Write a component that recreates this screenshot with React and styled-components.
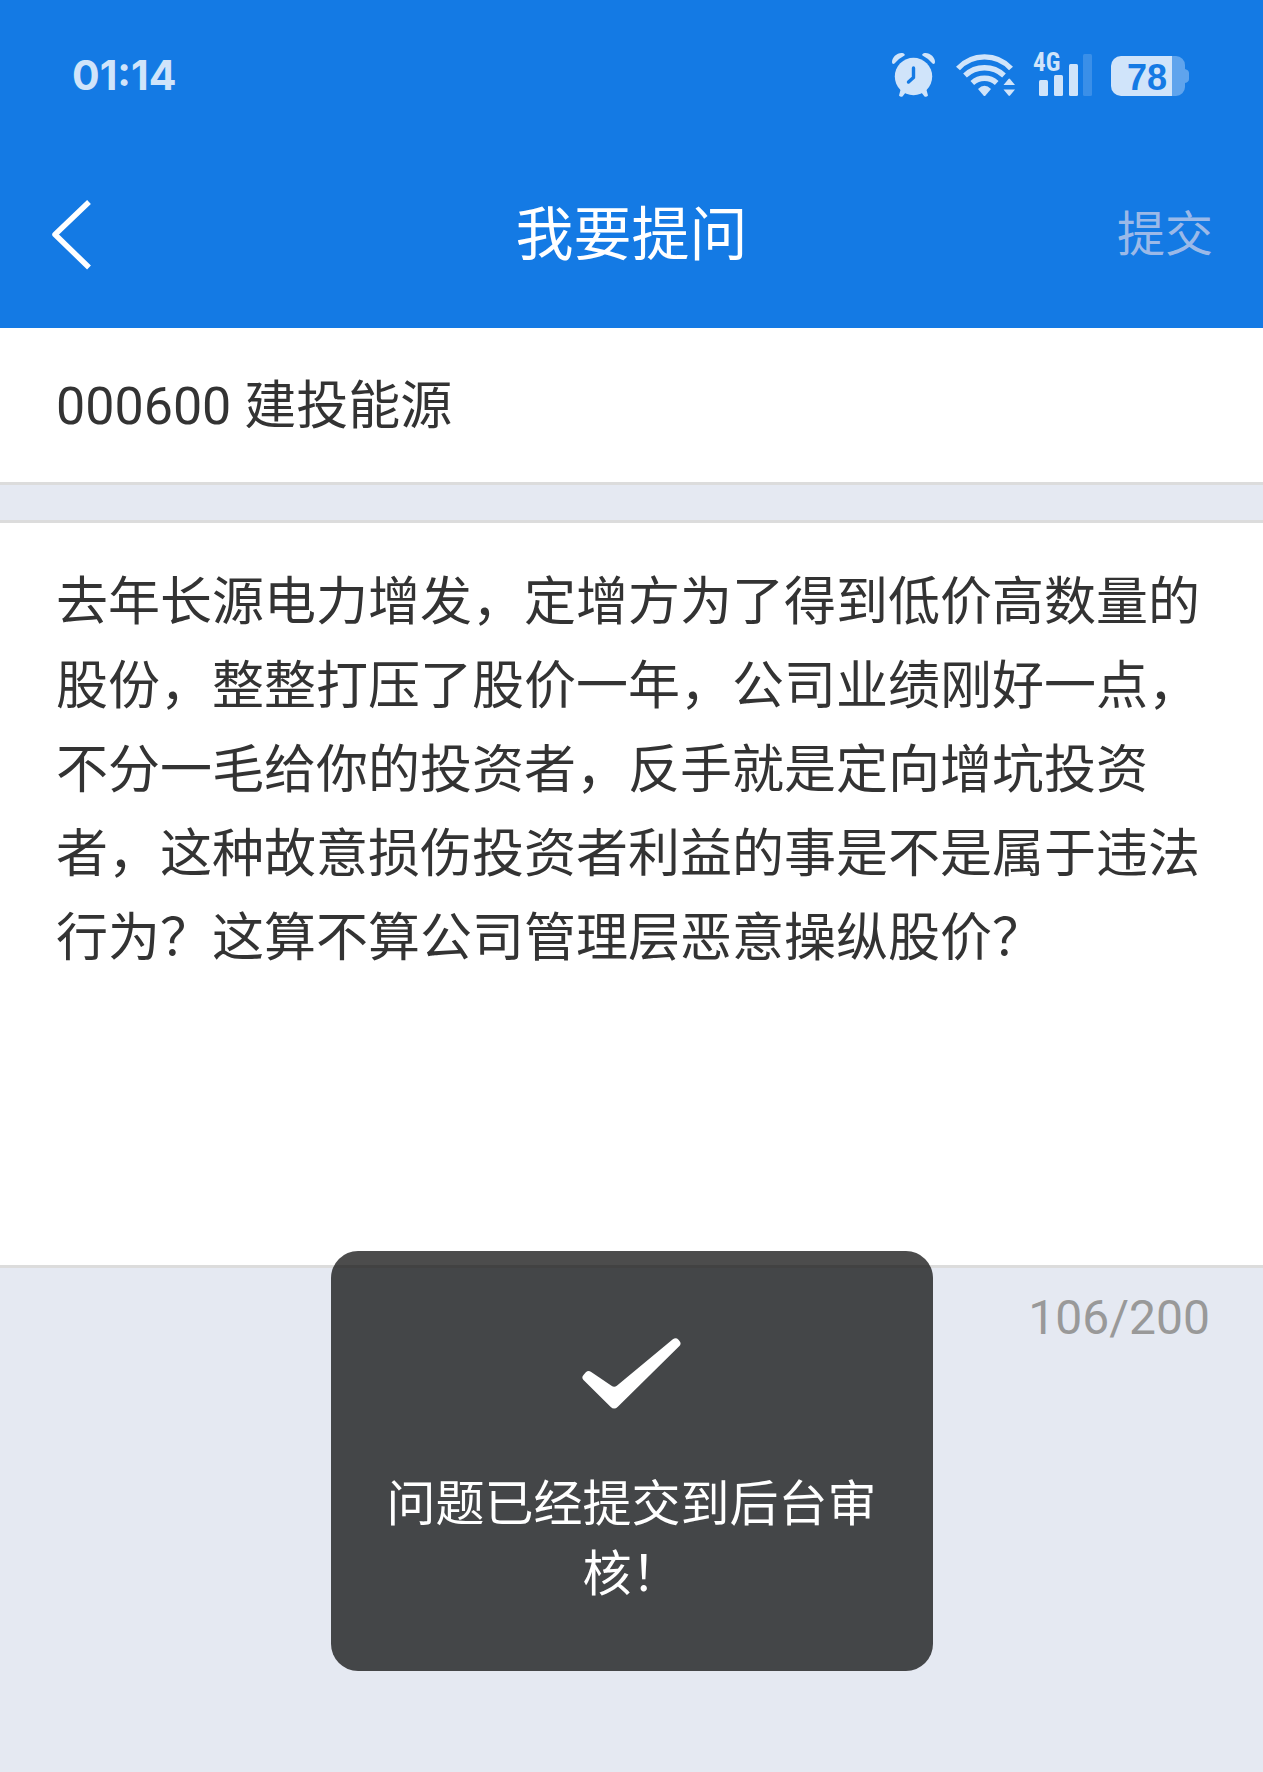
import React from 'react';
import styled, { createGlobalStyle } from 'styled-components';

/* Estilos */
const GlobalStyle = createGlobalStyle`
  * {
    box-sizing: border-box;
  }

  body {
    margin: 0;
    background-color: #e5e9f2;
    font-family: Roboto, "Noto Sans CJK SC", sans-serif;
    color: #333333;
  }
`;

const Page = styled.div`
  display: flex;
  flex-direction: column;
  min-height: 100vh;
  overflow: hidden;
`;

const Header = styled.header`
  background-color: #147ae4;
  color: #ffffff;
`;

const StatusBar = styled.div`
  display: flex;
  align-items: center;
  justify-content: space-between;
  height: 138px;
  padding: 12px 74px 0 72px;
  color: #d0e4fa;
`;

const Clock = styled.time`
  font-family: Inter, sans-serif;
  font-size: 41px;
  font-weight: 700;
  line-height: 48px;
`;

const StatusIcons = styled.div`
  display: flex;
  align-items: center;
  gap: 16px;

  svg {
    display: block;
    fill: currentColor;
  }
`;

const NavBar = styled.nav`
  display: grid;
  grid-template-columns: 1fr auto 1fr;
  align-items: center;
  height: 190px;
  padding: 4px 50px 0;
`;

const NavButton = styled.button`
  justify-self: ${props => props.$side};
  padding: 0;
  border: 0;
  background-color: transparent;
  font-family: inherit;
  font-size: 48px;
  line-height: 70px;
  color: #9bb9e8;
  cursor: pointer;

  svg {
    display: block;
  }
`;

const Title = styled.h1`
  margin: 0;
  font-size: 58px;
  font-weight: 400;
  line-height: 84px;
`;

const Stock = styled.div`
  padding: 37px 56px 33px;
  border-bottom: 3px solid #dcdcdc;
  background-color: #ffffff;
  font-size: 52px;
  line-height: 84px;
`;

const Question = styled.textarea`
  display: block;
  width: 100%;
  height: 748px;
  margin-top: 35px;
  padding: 38px 56px 32px;
  border: solid #dcdcdc;
  border-width: 3px 0;
  border-radius: 0;
  outline: none;
  resize: none;
  background-color: #ffffff;
  font-family: inherit;
  font-size: 52px;
  line-height: 84px;
  color: inherit;
`;

const Footer = styled.div`
  position: relative;
  flex: 1;
  padding: 15px 53px;
`;

const Counter = styled.div`
  text-align: right;
  font-size: 48px;
  line-height: 70px;
  color: #999999;
`;

const Toast = styled.div`
  position: absolute;
  top: -17px;
  left: 50%;
  display: flex;
  flex-direction: column;
  align-items: center;
  gap: 61px;
  width: 602px;
  padding: 87px 54px 61px;
  border-radius: 27px;
  background-color: rgba(0, 0, 0, .7);
  color: #ffffff;
  transform: translateX(-50%);
`;

const Message = styled.p`
  margin: 0;
  text-align: center;
  font-size: 49px;
  line-height: 70px;
`;

/* Iconos */
const AlarmIcon = () => (
  <svg width="48" height="44" viewBox="0 0 48 44" aria-hidden="true">
    <path d="M2.500 10.500Q6.500 5.500 12.500 2.500C13.500 1.500 12 0 9.500 0 4.500 0 0 4.500 0 9c0 2 1.500 2.500 2.500 1.500zM40.500 10.500Q36.500 5.500 30.500 2.500C29.500 1.500 31 0 33.500 0 38.500 0 43 4.500 43 9c0 2-1.500 2.500-2.500 1.500z" />
    <path d="M9 35l5 4-3.500 4.500q-2 1-3.500-1zM34 35l-5 4 3.500 4.500q2 1 3.500-1z" />
    <circle cx="21.500" cy="23.500" r="18.700" />
    <path d="M21.500 15v9.500l-5 4.500" fill="none" stroke="#147ae4" strokeWidth="3.400" strokeLinecap="round" strokeLinejoin="round" />
  </svg>
);

const WifiIcon = () => (
  <svg width="60" height="44" viewBox="0 0 60 44" aria-hidden="true">
    <g fill="none" stroke="currentColor" strokeWidth="5.400">
      <path d="M2 15.500a36 36 0 0 1 53 0" />
      <path d="M9 22.500a28.500 28.500 0 0 1 39 0" />
      <path d="M16.300 30a18 18 0 0 1 24.400 0" />
    </g>
    <path d="M22 36q6.500-6.500 13 0l-5.500 6.500q-1 1-2 0z" />
    <path d="M47.500 32l5-6q.7-.8 1.500 0l5 6zM47.500 36.500l5 6q.7.800 1.500 0l5-6z" />
  </svg>
);

const SignalIcon = () => (
  <svg width="63" height="60" viewBox="0 -8 63 60" aria-label="4G">
    <text x="1" y="18" fontFamily="'Roboto Condensed', Roboto, sans-serif" fontSize="25" fontWeight="700">4G</text>
    <rect x="7" y="27" width="9" height="16" rx="1.500" />
    <rect x="22" y="22" width="9" height="21" rx="1.500" />
    <rect x="37" y="11" width="9" height="32" rx="1.500" />
    <rect x="51" y="1" width="9" height="42" rx="1.500" opacity=".2" />
  </svg>
);

const BatteryIcon = () => (
  <svg width="78" height="50" viewBox="0 -6 78 50" aria-label="78%">
    <path d="M61 0h4a9 9 0 0 1 9 9v4q4 1 4 4v6q0 3-4 4v4a9 9 0 0 1-9 9h-4z" opacity=".4" />
    <path d="M10 0h51v40H10A10 10 0 0 1 0 30V10A10 10 0 0 1 10 0z" />
    <text x="16" y="34" fill="#147ae4" fontFamily="'Liberation Sans', sans-serif" fontSize="36" fontWeight="700">78</text>
  </svg>
);

const BackIcon = () => (
  <svg width="42" height="70" viewBox="0 0 42 70" fill="none" aria-hidden="true">
    <path d="M39 2L5 34.500l34 33" stroke="#ffffff" strokeWidth="5.500" strokeLinejoin="round" />
  </svg>
);

const CheckIcon = () => (
  <svg width="99" height="71" viewBox="0 0 296 213" fill="#ffffff" aria-hidden="true">
    <path d="M4 126Q-3 119 4 111L11 103Q18 96 26 101L88 143Q96 149 104 143L272 4Q281-3 289 5L292 9Q299 17 291 25L107 206Q96 217 85 206z" />
  </svg>
);

/* Componentes */
const MAX_LENGTH = 200;

class App extends React.Component {

  constructor (props) {
    super(props);
    this.state = {
      question: '去年长源电力增发，定增方为了得到低价高数量的股份，整整打压了股价一年，公司业绩刚好一点，不分一毛给你的投资者，反手就是定向增坑投资者，这种故意损伤投资者利益的事是不是属于违法行为？这算不算公司管理层恶意操纵股价？',
      count: 106,
    }
  }

  handleChange = event => {
    this.setState({
      question: event.target.value,
      count: event.target.value.length
    });
  }

  render () {
    return (
      <Page>
        <GlobalStyle />
        <Header>
          <StatusBar>
            <Clock>01:14</Clock>
            <StatusIcons>
              <AlarmIcon />
              <WifiIcon />
              <SignalIcon />
              <BatteryIcon />
            </StatusIcons>
          </StatusBar>
          <NavBar>
            <NavButton type='button' $side='start' aria-label='返回'>
              <BackIcon />
            </NavButton>
            <Title>我要提问</Title>
            <NavButton type='button' $side='end'>提交</NavButton>
          </NavBar>
        </Header>
        <Stock>000600 建投能源</Stock>
        <Question
          aria-label='我要提问'
          maxLength={MAX_LENGTH}
          spellCheck={false}
          value={this.state.question}
          onChange={this.handleChange}
        />
        <Footer>
          <Counter>{this.state.count}/{MAX_LENGTH}</Counter>
          <Toast role='status'>
            <CheckIcon />
            <Message>问题已经提交到后台审核！</Message>
          </Toast>
        </Footer>
      </Page>
    )
  }
}

export default App;
